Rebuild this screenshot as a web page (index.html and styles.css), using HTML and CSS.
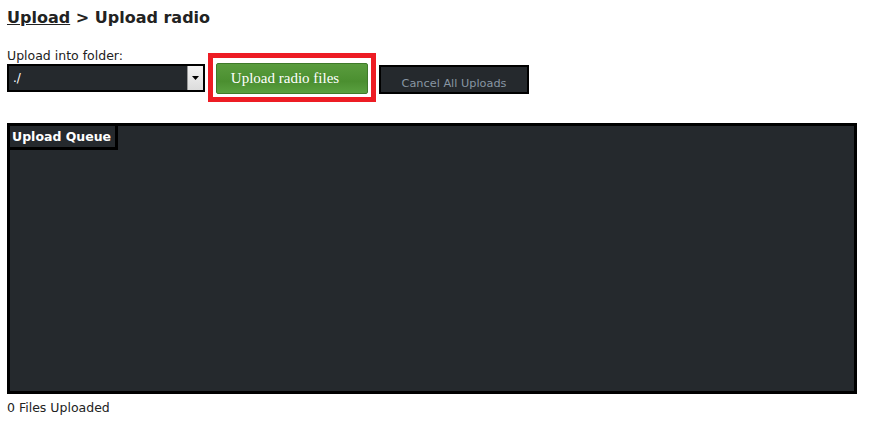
FILE: index.html
```html
<!DOCTYPE html>
<html>
<head>
<meta charset="utf-8">
<link rel="stylesheet" href="styles.css">
</head>
<body>
<div class="page">
  <h1 class="title"><a href="#" class="crumb">Upload</a> &gt; Upload radio</h1>
  <div class="controls">
    <div class="folder">
      <label class="label">Upload into folder:</label>
      <div class="select">
        <span class="select-value">./</span>
        <span class="select-btn"><svg width="7" height="4" viewBox="0 0 7 4"><path d="M0 0h7L3.5 4z" fill="#000"/></svg></span>
      </div>
    </div>
    <div class="highlight">
      <button class="upload-btn">Upload radio files</button>
    </div>
    <button class="cancel-btn">Cancel All Uploads</button>
  </div>
  <div class="queue">
    <div class="queue-head">Upload Queue</div>
  </div>
  <div class="status">0 Files Uploaded</div>
</div>
</body>
</html>
```

FILE: styles.css
```css
html, body { margin: 0; padding: 0; background: #fff; }
body { font-family: "DejaVu Sans", Verdana, sans-serif; color: #222; }
.page { padding: 7px 0 0 7px; width: 850px; }
.title { margin: 0; font-size: 16px; font-weight: bold; line-height: 22px; color: #222; }
.crumb { color: #222; text-decoration: underline; }
.controls { display: flex; align-items: flex-start; margin-top: 20px; }
.folder { display: flex; flex-direction: column; }
.label { font-size: 12.5px; line-height: 14px; color: #222; margin-bottom: 1px; }
.select { width: 194px; height: 24px; border: 2px solid #000; background: #25292d; display: flex; align-items: center; justify-content: space-between; }
.select-value { color: #fff; font-size: 12px; padding-left: 4px; }
.select-btn { width: 15px; height: 24px; background: linear-gradient(#f4f4f4, #dcdcdc); border-left: 1px solid #999; display: flex; align-items: center; justify-content: center; }
.highlight { margin-left: 3px; margin-top: 4px; border: 5px solid #ed1c24; padding: 5px 3px 3px 3px; background: #fff; }
.upload-btn { display: block; width: 152px; height: 31px; border: 1px solid #3f7a2a; border-radius: 2px; background: linear-gradient(#5a9c3e, #4b8f30 60%, #5aa040); color: #fff; font-family: "Liberation Serif", "Times New Roman", serif; font-size: 15px; padding: 0 14px 0 0; }
.cancel-btn { margin-left: 3px; margin-top: 16px; width: 150px; height: 29px; border: 2px solid #000; background: #25292d; color: #8896a3; font-family: "DejaVu Sans", Verdana, sans-serif; font-size: 11.3px; padding: 7px 0 0 0; }
.queue { margin-top: 21px; width: 844px; height: 265px; border: 3px solid #000; background: #25292d; }
.queue-head { display: inline-block; color: #fff; font-weight: bold; font-size: 12.5px; line-height: 21px; padding: 0 4px 0 2px; border-right: 3px solid #000; border-bottom: 3px solid #000; }
.status { font-size: 12.5px; line-height: 15px; margin-top: 6px; color: #222; }
```
